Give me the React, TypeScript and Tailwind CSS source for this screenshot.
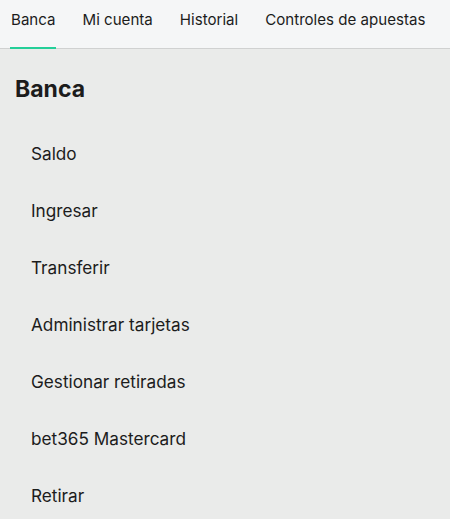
import React from "react";

const tabs = ["Banca", "Mi cuenta", "Historial", "Controles de apuestas"];
const items = [
  "Saldo",
  "Ingresar",
  "Transferir",
  "Administrar tarjetas",
  "Gestionar retiradas",
  "bet365 Mastercard",
  "Retirar",
];

export default function App() {
  return (
    <div
      className="w-[450px] h-[519px] overflow-hidden bg-[#eaebea] text-[#1c1c1c]"
      style={{ fontFamily: "Inter, 'Noto Sans', sans-serif" }}
    >
      <div className="h-[49px] bg-[#f5f6f7] border-b border-[#d0d1d1] flex items-start pl-[11px] gap-[27px] whitespace-nowrap">
        {tabs.map((t, i) => (
          <div key={t} className="relative h-[48px] pt-[10px] text-[15.1px] leading-[20px]">
            {t}
            {i === 0 && (
              <div className="absolute left-[-1px] right-0 bottom-[-1px] h-[2px] bg-[#25cf99]" />
            )}
          </div>
        ))}
      </div>
      <div className="pl-[15px] pt-[26px] text-[23px] font-bold leading-[28px]">Banca</div>
      <div className="pl-[31px] pt-[41px] flex flex-col">
        {items.map((it) => (
          <div key={it} className="h-[57px] text-[17.2px] leading-[20px]">
            {it}
          </div>
        ))}
      </div>
    </div>
  );
}
